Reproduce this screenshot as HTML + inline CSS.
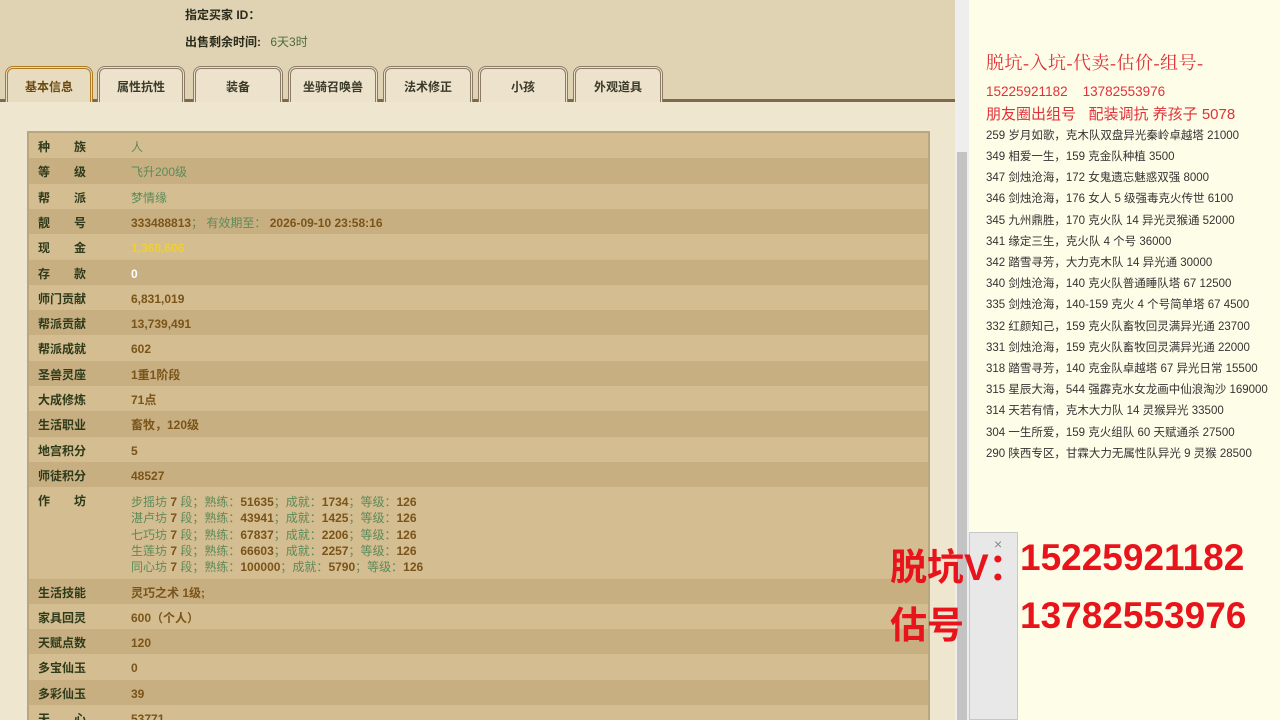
<!DOCTYPE html>
<html><head><meta charset="utf-8"><style>
*{margin:0;padding:0;box-sizing:border-box}
body{width:1280px;height:720px;overflow:hidden;position:relative;background:#fefde8;font-family:"Liberation Sans","Noto Sans CJK SC",sans-serif}
#left{position:absolute;left:0;top:0;width:955px;height:720px;background:#efe6cf;overflow:hidden}
#top{position:absolute;left:0;top:0;width:955px;height:102px;background:#e0d3b4;border-bottom:3px solid #7d6a4c}
.lab{position:absolute;font-size:12px;font-weight:bold;color:#2a2a1a}
.tab{position:absolute;top:66px;height:36px;border:3px double #8a7a66;border-bottom:none;border-radius:8px 8px 0 0;background:#ede3cc;font-size:12px;font-weight:bold;color:#3a3a2a;text-align:center;line-height:36px}
.tab.on{border-color:#b07a20;color:#6a4a10;background:#e8dcc0}
#tbl{position:absolute;left:27px;top:131px;width:903px;height:600px;border:2px solid #b9a67e;background:#d2ba8c}
.r{position:absolute;left:0;width:899px;height:25.3px;font-size:12px;line-height:29px}
.r:nth-child(odd){background:#d4bd90}.r:nth-child(even){background:#c8af82}
.k{position:absolute;left:9px;font-weight:bold;color:#2e3a1a}
.v{position:absolute;left:102px;color:#7a5418;font-weight:bold}
.g{color:#5d8a5a;font-weight:normal}
#sb{position:absolute;left:955px;top:0;width:14px;height:720px;background:#eeeeee}
#thumb{position:absolute;left:957px;top:152px;width:10px;height:568px;background:#c3c3c3}
#right{position:absolute;left:969px;top:0;width:311px;height:720px;background:#fefde8}
.red{position:absolute;color:#e0323a;white-space:nowrap}
.li{position:absolute;left:986px;font-size:11.5px;color:#333;white-space:nowrap}
.big{position:absolute;color:#e8141c;font-weight:bold;font-size:37px;white-space:nowrap}
</style></head><body>
<div id="left">
<div id="top">
<div class="lab" style="left:185px;top:6px">指定买家 ID：</div>
<div class="lab" style="left:185px;top:33px">出售剩余时间: <span style="font-weight:normal;color:#4a6a3a;margin-left:6px">6天3时</span></div>
<div class="tab on" style="left:5px;width:88px">基本信息</div>
<div class="tab" style="left:97px;width:88px">属性抗性</div>
<div class="tab" style="left:193px;width:90px">装备</div>
<div class="tab" style="left:288px;width:90px">坐骑召唤兽</div>
<div class="tab" style="left:383px;width:90px">法术修正</div>
<div class="tab" style="left:478px;width:90px">小孩</div>
<div class="tab" style="left:573px;width:90px">外观道具</div>
</div>
<div id="tbl">
<div class="r" style="top:0"><span class="k">种&emsp;&emsp;族</span><span class="v g">人</span></div>
<div class="r" style="top:25.3px"><span class="k">等&emsp;&emsp;级</span><span class="v g">飞升200级</span></div>
<div class="r" style="top:50.6px"><span class="k">帮&emsp;&emsp;派</span><span class="v g">梦情缘</span></div>
<div class="r" style="top:75.9px"><span class="k">靓&emsp;&emsp;号</span><span class="v">333488813<span class="g">；&nbsp;有效期至：&nbsp;</span>2026-09-10 23:58:16</span></div>
<div class="r" style="top:101.2px"><span class="k">现&emsp;&emsp;金</span><span class="v" style="color:#f0d030">1,368,606</span></div>
<div class="r" style="top:126.5px"><span class="k">存&emsp;&emsp;款</span><span class="v" style="color:#fff">0</span></div>
<div class="r" style="top:151.8px"><span class="k">师门贡献</span><span class="v">6,831,019</span></div>
<div class="r" style="top:177.1px"><span class="k">帮派贡献</span><span class="v">13,739,491</span></div>
<div class="r" style="top:202.4px"><span class="k">帮派成就</span><span class="v">602</span></div>
<div class="r" style="top:227.7px"><span class="k">圣兽灵座</span><span class="v">1重1阶段</span></div>
<div class="r" style="top:253px"><span class="k">大成修炼</span><span class="v">71点</span></div>
<div class="r" style="top:278.3px"><span class="k">生活职业</span><span class="v">畜牧，120级</span></div>
<div class="r" style="top:303.6px"><span class="k">地宫积分</span><span class="v">5</span></div>
<div class="r" style="top:328.9px"><span class="k">师徒积分</span><span class="v">48527</span></div>
<div class="r" style="top:354.2px;height:91px;background:#d4bd90;line-height:16.3px"><span class="k" style="top:6px">作&emsp;&emsp;坊</span><span class="v" style="top:7px">
<span class="g">步摇坊</span> 7 <span class="g">段；熟练：</span>51635<span class="g">；成就：</span>1734<span class="g">；等级：</span>126<br>
<span class="g">湛卢坊</span> 7 <span class="g">段；熟练：</span>43941<span class="g">；成就：</span>1425<span class="g">；等级：</span>126<br>
<span class="g">七巧坊</span> 7 <span class="g">段；熟练：</span>67837<span class="g">；成就：</span>2206<span class="g">；等级：</span>126<br>
<span class="g">生莲坊</span> 7 <span class="g">段；熟练：</span>66603<span class="g">；成就：</span>2257<span class="g">；等级：</span>126<br>
<span class="g">同心坊</span> 7 <span class="g">段；熟练：</span>100000<span class="g">；成就：</span>5790<span class="g">；等级：</span>126</span></div>
<div class="r" style="top:445.5px;background:#c8af82"><span class="k">生活技能</span><span class="v">灵巧之术 1级;</span></div>
<div class="r" style="top:470.8px;background:#d4bd90"><span class="k">家具回灵</span><span class="v">600（个人）</span></div>
<div class="r" style="top:496.1px;background:#c8af82"><span class="k">天赋点数</span><span class="v">120</span></div>
<div class="r" style="top:521.4px;background:#d4bd90"><span class="k">多宝仙玉</span><span class="v">0</span></div>
<div class="r" style="top:546.7px;background:#c8af82"><span class="k">多彩仙玉</span><span class="v">39</span></div>
<div class="r" style="top:572px;background:#d4bd90"><span class="k">天&emsp;&emsp;心</span><span class="v">53771</span></div>
</div>
</div>
<div id="sb"></div><div id="thumb"></div>
<div id="right"></div>
<div class="red" style="left:986px;top:49px;font-size:18px;font-family:'Liberation Serif','Noto Serif CJK SC',serif;letter-spacing:0.5px">脱坑-入坑-代卖-估价-组号-</div>
<div class="red" style="left:986px;top:84px;font-size:13.5px">15225921182&nbsp;&nbsp;&nbsp;&nbsp;13782553976</div>
<div class="red" style="left:986px;top:103px;font-size:15px">朋友圈出组号&nbsp;&nbsp;&nbsp;配装调抗 养孩子 5078</div>
<div class="li" style="top:127px">259 岁月如歌，克木队双盘异光秦岭卓越塔 21000</div>
<div class="li" style="top:148px">349 相爱一生，159 克金队种植 3500</div>
<div class="li" style="top:169px">347 剑烛沧海，172 女鬼遗忘魅惑双强 8000</div>
<div class="li" style="top:190px">346 剑烛沧海，176 女人 5 级强毒克火传世 6100</div>
<div class="li" style="top:212px">345 九州鼎胜，170 克火队 14 异光灵猴通 52000</div>
<div class="li" style="top:233px">341 缘定三生，克火队 4 个号 36000</div>
<div class="li" style="top:254px">342 踏雪寻芳，大力克木队 14 异光通 30000</div>
<div class="li" style="top:275px">340 剑烛沧海，140 克火队普通睡队塔 67 12500</div>
<div class="li" style="top:296px">335 剑烛沧海，140-159 克火 4 个号简单塔 67 4500</div>
<div class="li" style="top:318px">332 红颜知己，159 克火队畜牧回灵满异光通 23700</div>
<div class="li" style="top:339px">331 剑烛沧海，159 克火队畜牧回灵满异光通 22000</div>
<div class="li" style="top:360px">318 踏雪寻芳，140 克金队卓越塔 67 异光日常 15500</div>
<div class="li" style="top:381px">315 星辰大海，544 强霹克水女龙画中仙浪淘沙 169000</div>
<div class="li" style="top:402px">314 天若有情，克木大力队 14 灵猴异光 33500</div>
<div class="li" style="top:424px">304 一生所爱，159 克火组队 60 天赋通杀 27500</div>
<div class="li" style="top:445px">290 陕西专区，甘霖大力无属性队异光 9 灵猴 28500</div>
<div style="position:absolute;left:969px;top:532px;width:49px;height:188px;background:#e8e8e8;border:1px solid #c8c8c8"></div>
<div style="position:absolute;left:994px;top:536px;font-size:14px;color:#888">×</div>
<div class="big" style="left:890px;top:537px">脱坑V：</div>
<div class="big" style="left:1020px;top:537px">15225921182</div>
<div class="big" style="left:890px;top:595px">估号</div>
<div class="big" style="left:1020px;top:595px">13782553976</div>
</body></html>
